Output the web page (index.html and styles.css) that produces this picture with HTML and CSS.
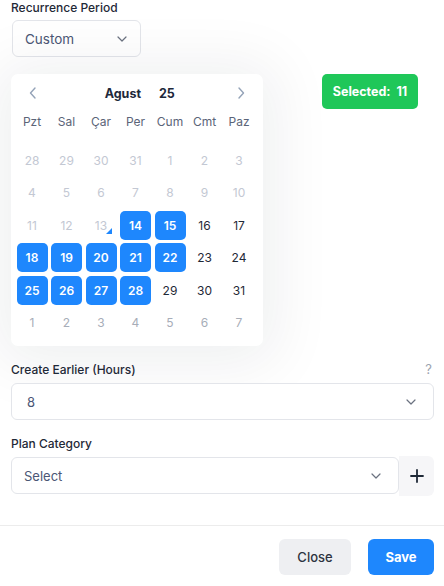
FILE: index.html
```html
<!DOCTYPE html>
<html>
<head>
<meta charset="utf-8">
<link rel="stylesheet" href="styles.css">
</head>
<body>
<div class="page">
  <div class="field">
    <div class="label">Recurrence Period</div>
    <div class="select select-small">
      <span class="value">Custom</span>
      <svg class="chev" width="10" height="6" viewBox="0 0 10 6"><path d="M1 1l4 4 4-4" fill="none" stroke="#6b7280" stroke-width="1.2" stroke-linecap="round" stroke-linejoin="round"/></svg>
    </div>
  </div>

  <div class="cal-row">
    <div class="calendar">
      <div class="cal-head">
        <svg class="nav" width="8" height="12" viewBox="0 0 8 12"><path d="M6 1L1.5 6 6 11" fill="none" stroke="#94a3b8" stroke-width="1.4" stroke-linecap="round" stroke-linejoin="round"/></svg>
        <div class="title"><span>Agust</span><span>25</span></div>
        <svg class="nav" width="8" height="12" viewBox="0 0 8 12"><path d="M2 1l4.5 5L2 11" fill="none" stroke="#94a3b8" stroke-width="1.4" stroke-linecap="round" stroke-linejoin="round"/></svg>
      </div>
      <div class="grid weekdays">
        <span>Pzt</span><span>Sal</span><span>Çar</span><span>Per</span><span>Cum</span><span>Cmt</span><span>Paz</span>
      </div>
      <div class="grid days">
        <span class="d prev">28</span><span class="d prev">29</span><span class="d prev">30</span><span class="d prev">31</span><span class="d prev">1</span><span class="d prev">2</span><span class="d prev">3</span>
        <span class="d prev">4</span><span class="d prev">5</span><span class="d prev">6</span><span class="d prev">7</span><span class="d prev">8</span><span class="d prev">9</span><span class="d prev">10</span>
        <span class="d prev">11</span><span class="d prev">12</span><span class="d prev today">13</span><span class="d sel">14</span><span class="d sel">15</span><span class="d">16</span><span class="d">17</span>
        <span class="d sel">18</span><span class="d sel">19</span><span class="d sel">20</span><span class="d sel">21</span><span class="d sel">22</span><span class="d">23</span><span class="d">24</span>
        <span class="d sel">25</span><span class="d sel">26</span><span class="d sel">27</span><span class="d sel">28</span><span class="d">29</span><span class="d">30</span><span class="d">31</span>
        <span class="d next">1</span><span class="d next">2</span><span class="d next">3</span><span class="d next">4</span><span class="d next">5</span><span class="d next">6</span><span class="d next">7</span>
      </div>
    </div>
    <div class="badge">Selected:&nbsp; 11</div>
  </div>

  <div class="field f2">
    <div class="label-row"><span class="label">Create Earlier (Hours)</span><span class="help">?</span></div>
    <div class="select select-wide pad15">
      <span class="value">8</span>
      <svg class="chev" width="10" height="6" viewBox="0 0 10 6"><path d="M1 1l4 4 4-4" fill="none" stroke="#6b7280" stroke-width="1.2" stroke-linecap="round" stroke-linejoin="round"/></svg>
    </div>
  </div>

  <div class="field f3">
    <div class="label">Plan Category</div>
    <div class="combo">
      <div class="select select-flex">
        <span class="value">Select</span>
        <svg class="chev" width="10" height="6" viewBox="0 0 10 6"><path d="M1 1l4 4 4-4" fill="none" stroke="#6b7280" stroke-width="1.2" stroke-linecap="round" stroke-linejoin="round"/></svg>
      </div>
      <div class="plus">
        <svg width="14" height="14" viewBox="0 0 14 14"><path d="M7 1v12M1 7h12" stroke="#1f2937" stroke-width="1.8" stroke-linecap="round"/></svg>
      </div>
    </div>
  </div>
</div>
<div class="footer">
  <button class="btn close">Close</button>
  <button class="btn save">Save</button>
</div>
</body>
</html>
```

FILE: styles.css
```css
* { box-sizing: border-box; }
html, body { margin: 0; padding: 0; background: #fff; }
body {
  font-family: Inter, "Noto Sans", sans-serif;
  width: 444px;
  height: 586px;
  overflow: hidden;
  color: #1f2937;
}
.page { padding: 0 10px 0 11px; }
.field { display: flex; flex-direction: column; }
.label {
  font-size: 12px;
  font-weight: 500;
  line-height: 16px;
  color: #1f2937;
}
.label-row { display: flex; justify-content: space-between; align-items: center; height: 16px; }
.help { color: #9ca3af; font-size: 13px; margin-right: 2px; margin-top: -3px; }
.select {
  display: flex;
  align-items: center;
  justify-content: space-between;
  border: 1px solid #e3e5ea;
  border-radius: 6px;
  background: #fff;
  height: 37px;
  padding: 0 13px 0 12px;
}
.value { font-size: 13px; color: #4b5675; }
.select-small { width: 129px; margin-top: 4px; margin-left: 1px; }
.select-small .value { font-size: 13.5px; }
.select-wide { width: 423px; margin-top: 5px; padding-right: 17px; }
.pad15 { padding-left: 15px; }
.chev { display: block; }

.cal-row { display: flex; align-items: flex-start; margin-top: 17px; gap: 59px; }
.calendar {
  width: 252px;
  height: 272px;
  background: #fff;
  border-radius: 7px;
  box-shadow: 0 4px 60px 14px rgba(15, 23, 42, 0.065);
  padding: 9px 3px 0 5.5px;
}
.cal-head {
  display: flex;
  align-items: center;
  justify-content: space-between;
  height: 20px;
  padding: 0 15px 0 12px;
}
.nav { display: block; }
.title { display: flex; gap: 18px; font-size: 12.5px; font-weight: 700; color: #1e293b; margin-left: 6px; }
.grid {
  display: grid;
  grid-template-columns: repeat(7, 31px);
  column-gap: 3.5px;
  justify-content: start;
}
.weekdays { margin-top: 11px; height: 16px; }
.weekdays span { font-size: 12px; color: #5b6478; text-align: center; line-height: 16px; }
.days { margin-top: 15.5px; row-gap: 3.5px; }
.d {
  position: relative;
  height: 29px;
  display: flex;
  align-items: center;
  justify-content: center;
  font-size: 12px;
  color: #1f2937;
  border-radius: 5px;
}
.d.prev { color: #c3c8d3; }
.d.next { color: #a7adb8; }
.d.sel { background: #1e87fd; color: #fff; font-weight: 600; }
.d.today::after {
  content: "";
  position: absolute;
  right: 5px;
  bottom: 6px;
  width: 0;
  height: 0;
  border-left: 6px solid transparent;
  border-bottom: 6px solid #1e87fd;
}
.badge {
  width: 96px;
  height: 35px;
  border-radius: 5px;
  background: #1fc759;
  color: #fff;
  font-size: 12.5px;
  font-weight: 700;
  display: flex;
  align-items: center;
  justify-content: center;
}
.f2 { margin-top: 16px; }
.f3 { margin-top: 16px; }
.combo { display: flex; margin-top: 5px; width: 423px; }
.select-flex { flex: 1; height: 37px; padding-right: 17px; }
.plus {
  width: 35px;
  height: 40px;
  margin-top: -1px;
  background: #f6f6f8;
  border-radius: 0 6px 6px 0;
  display: flex;
  align-items: center;
  justify-content: center;
}
.footer {
  margin-top: 29px;
  border-top: 1px solid #ececec;
  padding: 13px 10px 0 0;
  display: flex;
  justify-content: flex-end;
  gap: 17px;
}
.btn {
  border: none;
  height: 36px;
  border-radius: 6px;
  font-family: Inter, "Noto Sans", sans-serif;
  font-size: 13px;
  cursor: pointer;
}
.close { width: 72px; background: #eeeff2; color: #2d3340; font-weight: 500; }
.save { width: 66px; background: #1e87fd; color: #fff; font-weight: 700; }
```
